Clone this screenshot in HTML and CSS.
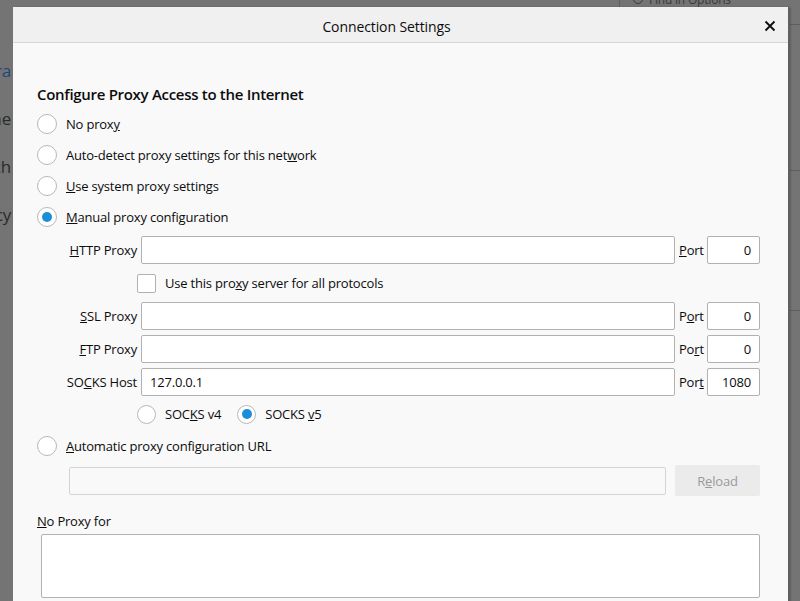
FILE: index.html
```html
<!DOCTYPE html>
<html>
<head>
<meta charset="utf-8">
<link rel="stylesheet" href="styles.css">
</head>
<body>
<div class="page">
  <div class="bg-search"><span class="bg-mag"></span><span>Find in Options</span></div>
  <div class="bg-left">
    <span class="bg-link">Genera</span>
    <span>Home</span>
    <span>Search</span>
    <span>Privacy</span>
  </div>
  <div class="bg-line l1"></div>
  <div class="bg-line l2"></div>
  <div class="bg-line l3"></div>

  <div class="dialog">
    <div class="titlebar">
      <span></span>
      <span class="title">Connection Settings</span>
      <span class="close">
        <svg width="12" height="12" viewBox="0 0 12 12"><path d="M1.5 1.5 L10.5 10.5 M10.5 1.5 L1.5 10.5" stroke="#0c0c0d" stroke-width="1.8" fill="none"/></svg>
      </span>
    </div>
    <div class="content">
      <h1 class="heading">Configure Proxy Access to the Internet</h1>
      <div class="radio-row"><span class="radio"></span><span>No prox<u>y</u></span></div>
      <div class="radio-row"><span class="radio"></span><span>Auto-detect proxy settings for this net<u>w</u>ork</span></div>
      <div class="radio-row"><span class="radio"></span><span><u>U</u>se system proxy settings</span></div>
      <div class="radio-row"><span class="radio checked"></span><span><u>M</u>anual proxy configuration</span></div>

      <div class="proxy-grid">
        <label class="lbl"><u>H</u>TTP Proxy</label>
        <div class="field"></div>
        <label class="port"><u>P</u>ort</label>
        <div class="field num">0</div>

        <div class="check-row"><span class="checkbox"></span><span>Use this pro<u>x</u>y server for all protocols</span></div>

        <label class="lbl"><u>S</u>SL Proxy</label>
        <div class="field"></div>
        <label class="port">P<u>o</u>rt</label>
        <div class="field num">0</div>

        <label class="lbl"><u>F</u>TP Proxy</label>
        <div class="field"></div>
        <label class="port">Po<u>r</u>t</label>
        <div class="field num">0</div>

        <label class="lbl">SO<u>C</u>KS Host</label>
        <div class="field text">127.0.0.1</div>
        <label class="port">Por<u>t</u></label>
        <div class="field num">1080</div>

        <div class="socks-row">
          <span class="radio small"></span><span class="socks-lbl">SOC<u>K</u>S v4</span>
          <span class="radio small checked"></span><span>SOCKS <u>v</u>5</span>
        </div>
      </div>

      <div class="radio-row auto"><span class="radio"></span><span><u>A</u>utomatic proxy configuration URL</span></div>
      <div class="url-row">
        <div class="field disabled"></div>
        <div class="btn">R<u>e</u>load</div>
      </div>

      <div class="noproxy-lbl"><u>N</u>o Proxy for</div>
      <div class="textarea"></div>
    </div>
  </div>
</div>
</body>
</html>
```

FILE: styles.css
```css
html, body {
  margin: 0;
  padding: 0;
}
body {
  width: 800px;
  height: 601px;
  overflow: hidden;
  background: #747474;
  font-family: "Open Sans", "Noto Sans", sans-serif;
  font-size: 13px;
  letter-spacing: -0.2px;
  color: #0c0c0d;
}
.page {
  position: relative;
  width: 800px;
  height: 601px;
  overflow: hidden;
}
/* dimmed underlying preferences page */
.bg-search {
  position: absolute;
  left: 619px;
  top: -9px;
  width: 200px;
  height: 16px;
  border-left: 1px solid #5e5e5e;
  display: flex;
  align-items: center;
  gap: 6px;
  padding-left: 13px;
  color: #3a3a3a;
  font-size: 12px;
}
.bg-mag {
  width: 8px;
  height: 8px;
  border: 1.5px solid #3a3a3a;
  border-radius: 50%;
}
.bg-left {
  position: absolute;
  right: 789px;
  top: 60px;
  display: flex;
  flex-direction: column;
  align-items: flex-end;
  gap: 26px;
  font-size: 17px;
  color: #2a2a2a;
  line-height: 22px;
  white-space: nowrap;
}
.bg-link { color: #22477a; }
.bg-line {
  position: absolute;
  left: 790px;
  width: 10px;
  height: 1px;
  background: #5f5f5f;
}
.l1 { top: 24px; }
.l2 { top: 170px; }
.l3 { top: 310px; }

.dialog {
  position: absolute;
  left: 13px;
  top: 7px;
  width: 775px;
  height: 610px;
  background: #f9f9f9;
  border-top-right-radius: 2px;
  box-shadow: 3px 0 2px rgba(0, 0, 0, 0.18);
}
.titlebar {
  height: 35px;
  background: #f0f0f0;
  border-bottom: 1px solid #d7d7d7;
  display: grid;
  grid-template-columns: 1fr auto 1fr;
  align-items: center;
}
.title {
  font-size: 14px;
  font-weight: 500;
  letter-spacing: -0.1px;
  margin: 3px 28px 0 0;
}
.close {
  justify-self: end;
  margin: 2px 12px 0 0;
  display: flex;
}
.content {
  padding: 0 28px 0 24px;
}
.heading {
  margin: 40px 0 3px;
  font-size: 15px;
  font-weight: 600;
  letter-spacing: -0.3px;
  line-height: 22px;
  height: 22px;
}
.radio-row {
  display: flex;
  align-items: center;
  gap: 9px;
  height: 31px;
}
.radio {
  width: 18px;
  height: 18px;
  border: 1px solid #b8b8b8;
  border-radius: 50%;
  background: #fff;
  flex: none;
  display: flex;
  align-items: center;
  justify-content: center;
}
.radio.checked::after {
  content: "";
  width: 10px;
  height: 10px;
  border-radius: 50%;
  background: #1c8ed9;
}
.proxy-grid {
  display: grid;
  grid-template-columns: 71px 534px 24px 53px;
  column-gap: 4px;
  row-gap: 5px;
  margin: 4px 0 0 29px;
  align-items: center;
}
.lbl {
  text-align: right;
  white-space: nowrap;
}
.port {
  white-space: nowrap;
}
.field {
  box-sizing: border-box;
  height: 28px;
  border: 1px solid #b1b1b1;
  border-radius: 2px;
  background: #fff;
  display: flex;
  align-items: center;
  padding: 0 8px;
}
.field.num {
  justify-content: flex-end;
}
.check-row {
  grid-column: 2 / 5;
  display: flex;
  align-items: center;
  gap: 9px;
  height: 20px;
  margin: 4px 0 4px -4px;
}
.checkbox {
  box-sizing: border-box;
  width: 19px;
  height: 19px;
  border: 1px solid #b1b1b1;
  border-radius: 2px;
  background: #fff;
}
.socks-row {
  grid-column: 2 / 5;
  display: flex;
  align-items: center;
  gap: 9px;
  height: 26px;
  margin-left: -4px;
}
.radio.small {
  width: 17px;
  height: 17px;
}
.socks-lbl {
  margin-right: 7px;
}
.radio-row.auto {
  margin-top: 3px;
}
.url-row {
  display: flex;
  align-items: center;
  gap: 9px;
  margin: 4px 0 0 32px;
}
.field.disabled {
  flex: 1;
  background: #f9f9f9;
  border-color: #d4d4d4;
}
.btn {
  width: 85px;
  height: 31px;
  box-sizing: border-box;
  border-radius: 2px;
  background: #ebebeb;
  color: #9a9a9a;
  display: flex;
  align-items: center;
  justify-content: center;
}
.noproxy-lbl {
  margin-top: 16px;
  line-height: 18px;
}
.textarea {
  box-sizing: border-box;
  margin: 4px 0 0 4px;
  height: 64px;
  border: 1px solid #b1b1b1;
  border-radius: 2px;
  background: #fff;
}
```
